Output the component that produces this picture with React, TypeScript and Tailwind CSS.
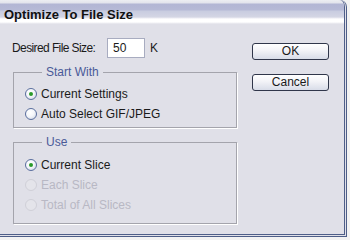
import React from "react";

function Radio({ checked, disabled, label }: { checked?: boolean; disabled?: boolean; label: string }) {
  return (
    <div className="flex items-center h-[20px]">
      <div
        className={
          disabled
            ? "w-[12px] h-[12px] rounded-full border border-[#d0d0d8] bg-[#e4e4ea]"
            : "w-[12px] h-[12px] rounded-full border border-[#5a6e9e] bg-[radial-gradient(circle_at_40%_35%,#ffffff_0%,#f4f6fa_45%,#c8d0e0_100%)] flex items-center justify-center"
        }
      >
        {checked && <div className="w-[4px] h-[4px] rounded-full bg-[#2a9a2a]" />}
      </div>
      <span className={disabled ? "ml-[4px] text-[#b8b8c4]" : "ml-[4px] text-[#1a1a1a]"}>{label}</span>
    </div>
  );
}

function Button({ label }: { label: string }) {
  return (
    <button className="w-[77px] h-[17px] rounded-[3px] border border-[#30364a] bg-[linear-gradient(to_bottom,#ffffff_0%,#f4f4f8_40%,#d8dce8_100%)] text-[12px] leading-[15px] text-[#1a1a1a] flex items-center justify-center">
      {label}
    </button>
  );
}

export default function App() {
  return (
    <div className="w-[350px] h-[240px] bg-[#f2f2f2] overflow-hidden" style={{ fontFamily: '"Liberation Sans", Arial, sans-serif' }}>
      <div className="w-[347px] h-[237px] bg-[#e0e0e8] border-r-[3px] border-b-[3px] border-double border-[#4e5e88] rounded-tr-[7px] flex flex-col text-[12px]">
        <div className="h-[24px] shrink-0 rounded-tr-[6px] bg-[linear-gradient(to_bottom,#eceef2_0px,#e2e4ec_3px,#b2b6d4_4px,#b6bad6_10px,#c8cce0_11px,#d4d6e4_17px,#ffffff_19px,#ffffff_22px,#e0e0e8_24px)] pl-[4px] pt-[6px]">
          <span className="font-bold text-[13px] leading-[14px] text-[#111]">Optimize To File Size</span>
        </div>
        <div className="flex">
          <div className="w-[237px] pl-[12px]">
            <div className="flex items-center mt-[14px] h-[20px]">
              <span className="text-[#1a1a1a] tracking-[-0.6px] w-[95px]">Desired File Size:</span>
              <div className="w-[38px] h-[20px] border border-[#a8acc0] bg-white flex items-center pl-[5px] text-[#1a1a1a]">50</div>
              <span className="ml-[5px] text-[#1a1a1a]">K</span>
            </div>
            <fieldset className="mt-[7px] ml-[1px] border border-[#a4a4ac] shadow-[1px_1px_0_#ffffff] pl-[11px] pt-[5px] pb-[3px]">
              <legend className="ml-[17px] px-[4px] text-[#4a5a98] leading-[14px]">Start With</legend>
              <Radio checked label="Current Settings" />
              <Radio label="Auto Select GIF/JPEG" />
            </fieldset>
            <fieldset className="mt-[7px] ml-[1px] border border-[#a4a4ac] shadow-[1px_1px_0_#ffffff] pl-[11px] pt-[6px] pb-[8px]">
              <legend className="ml-[17px] px-[4px] text-[#4a5a98] leading-[14px]">Use</legend>
              <Radio checked label="Current Slice" />
              <Radio disabled label="Each Slice" />
              <Radio disabled label="Total of All Slices" />
            </fieldset>
          </div>
          <div className="ml-[15px] mt-[19px] flex flex-col gap-[14px]">
            <Button label="OK" />
            <Button label="Cancel" />
          </div>
        </div>
      </div>
    </div>
  );
}
